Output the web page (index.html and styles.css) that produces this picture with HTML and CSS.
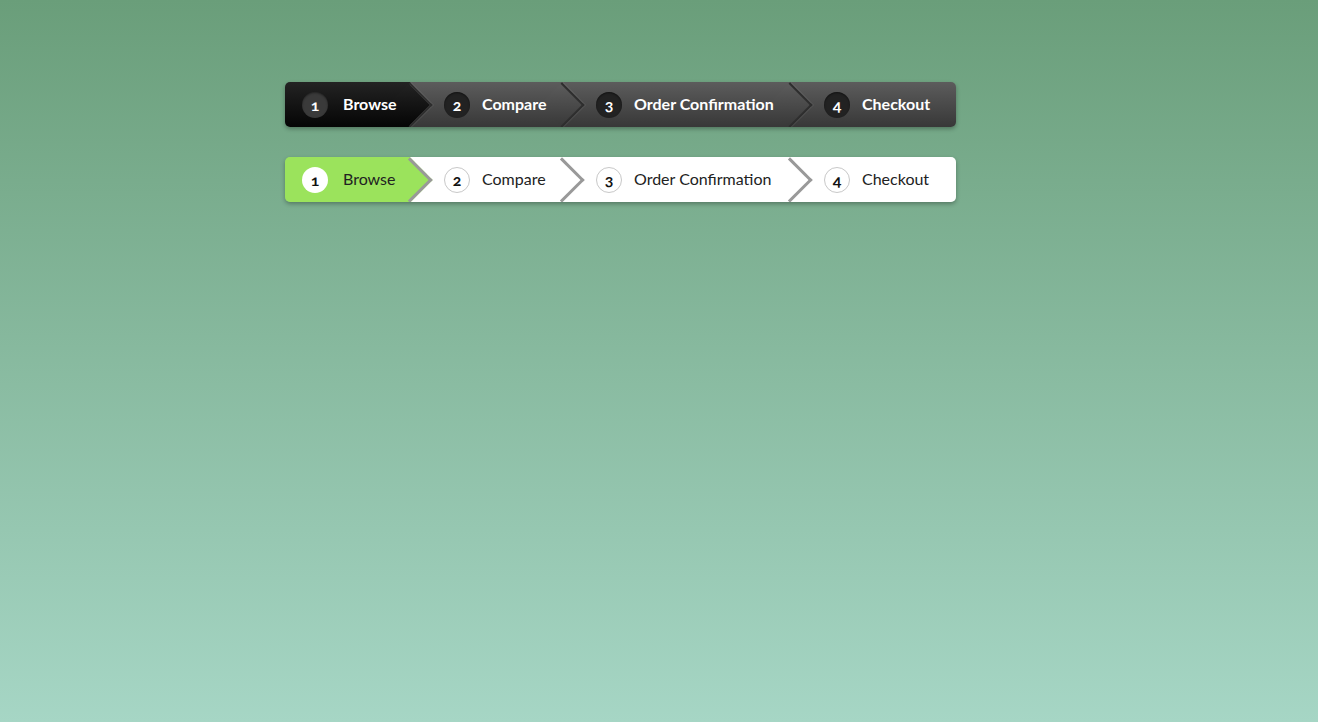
FILE: index.html
```html
<!DOCTYPE html>
<html>
<head>
<meta charset="utf-8">
<link rel="stylesheet" href="styles.css">
</head>
<body>
<div class="page">
  <ol class="steps dark">
    <li class="step s1 active"><span class="num">1</span><span class="label">Browse</span></li>
    <li class="step s2"><span class="num">2</span><span class="label">Compare</span></li>
    <li class="step s3"><span class="num">3</span><span class="label">Order Confirmation</span></li>
    <li class="step s4"><span class="num">4</span><span class="label">Checkout</span></li>
  </ol>
  <ol class="steps light">
    <li class="step s1 active"><span class="num">1</span><span class="label">Browse</span></li>
    <li class="step s2"><span class="num">2</span><span class="label">Compare</span></li>
    <li class="step s3"><span class="num">3</span><span class="label">Order Confirmation</span></li>
    <li class="step s4"><span class="num">4</span><span class="label">Checkout</span></li>
  </ol>
</div>
</body>
</html>
```
FILE: styles.css
```css
html, body {
  margin: 0;
  padding: 0;
  height: 100%;
}
body {
  background: linear-gradient(to bottom, #6a9e7a 0%, #a6d6c5 100%);
  font-family: Lato, "Open Sans", sans-serif;
}
.page {
  padding: 82px 0 0 285px;
}
.steps {
  list-style: none;
  margin: 0 0 30px 0;
  padding: 0;
  display: flex;
  width: 671px;
  height: 45px;
  border-radius: 5px;
  overflow: hidden;
  box-shadow: 0 2px 4px rgba(0, 0, 0, 0.3);
}
.step {
  position: relative;
  display: flex;
  align-items: center;
  box-sizing: border-box;
  height: 45px;
  padding-left: 34px;
  font-size: 16px;
}
.s1 { width: 125px; padding-left: 17px; z-index: 4; }
.s2 { width: 152px; z-index: 3; }
.s3 { width: 228px; z-index: 2; }
.s4 { flex: 1; z-index: 1; }
.step::after {
  content: "";
  position: absolute;
  z-index: 0;
  box-sizing: border-box;
  width: 32px;
  height: 32px;
  left: calc(100% - 16px);
  top: 6.5px;
  transform: rotate(45deg);
  border-top: 3px solid #999;
  border-right: 3px solid #999;
}
.s4::after { display: none; }
.num {
  position: relative;
  z-index: 1;
  width: 26px;
  height: 26px;
  border-radius: 50%;
  box-sizing: border-box;
  display: flex;
  align-items: center;
  justify-content: center;
  font-weight: 700;
  font-size: 16px;
  font-variant-numeric: oldstyle-nums;
  margin-right: 12px;
  flex: none;
}
.s1 .num { margin-right: 15px; }
.label {
  position: relative;
  z-index: 1;
  top: -1px;
  white-space: nowrap;
}

/* dark */
.dark .step {
  background: linear-gradient(to bottom, #5c5c5c, #383838);
  color: #fff;
  font-weight: 700;
}
.dark .step::after {
  background: linear-gradient(135deg, #5c5c5c, #383838);
  border-top: 2px solid #2e2e2e;
  border-right: 2px solid #2e2e2e;
  box-shadow: 1px -1px 0 rgba(255, 255, 255, 0.08);
}
.dark .step.active {
  background: linear-gradient(to bottom, #232323, #050505);
}
.dark .step.active::after {
  background: linear-gradient(135deg, #232323, #050505);
}
.dark .num {
  background: #222;
  color: #fff;
  box-shadow: inset 0 1px 2px rgba(0, 0, 0, 0.5);
}
.dark .active .num {
  background: #3a3a3a;
  box-shadow: inset 0 1px 2px rgba(0, 0, 0, 0.4);
}

/* light */
.light .step {
  background: #fff;
  color: #222;
  font-weight: 400;
}
.light .step::after {
  background: #fff;
}
.light .step.active,
.light .step.active::after {
  background: #9be35c;
}
.light .num {
  background: #fff;
  color: #111;
  border: 1px solid #c8c8c8;
}
.light .active .num {
  border: none;
}
```
